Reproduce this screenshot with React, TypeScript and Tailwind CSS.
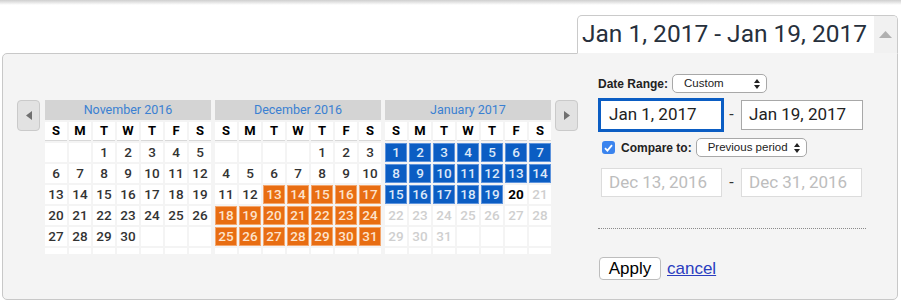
import React from 'react';

type Month = { title: string; startDay: number; days: number; key: string };

const months: Month[] = [
  { title: 'November 2016', startDay: 2, days: 30, key: 'nov' },
  { title: 'December 2016', startDay: 4, days: 31, key: 'dec' },
  { title: 'January 2017', startDay: 0, days: 31, key: 'jan' },
];

const dayNames = ['S', 'M', 'T', 'W', 'T', 'F', 'S'];

// which style a day gets
const dayKind = (key: string, d: number) => {
  if (key === 'dec' && d >= 13) return 'orange';
  if (key === 'jan' && d <= 19) return 'blue';
  if (key === 'jan' && d === 20) return 'today';
  if (key === 'jan' && d > 20) return 'future';
  return 'normal';
};

const Calendar = ({ month }: { month: Month }) => {
  const cells: (number | null)[] = [];
  for (let i = 0; i < month.startDay; i++) cells.push(null);
  for (let d = 1; d <= month.days; d++) cells.push(d);
  while (cells.length < 35) cells.push(null);

  return (
    <div className="w-[166px] flex flex-col">
      <div className="h-[20px] bg-[#d4d4d4] flex items-center justify-center text-[12.5px] text-[#3a80d2] font-['Roboto',sans-serif]">
        {month.title}
      </div>
      <div className="grid grid-cols-7 gap-[2px] mt-[2px] font-['Roboto',sans-serif]">
        {dayNames.map((n, i) => (
          <div key={i} className="h-[19px] bg-white flex items-center justify-center text-[13px] font-bold text-black border-b border-[#d8d8d8]">
            {n}
          </div>
        ))}
        {cells.map((d, i) => {
          if (d === null) return <div key={i} className="h-[19px] bg-white" />;
          const kind = dayKind(month.key, d);
          if (kind === 'orange')
            return (
              <div key={i} className="h-[19px] bg-[#e86d12] border border-[#f4a66c] flex items-center justify-center text-[13.5px] font-medium text-[#fde3cc]">
                {d}
              </div>
            );
          if (kind === 'blue')
            return (
              <div key={i} className="h-[19px] bg-[#0b5dc3] border border-[#5d93dc] flex items-center justify-center text-[13.5px] font-medium text-[#dbe8f9]">
                {d}
              </div>
            );
          return (
            <div
              key={i}
              className={
                kind === 'today'
                  ? 'h-[19px] bg-white flex items-center justify-center text-[13.5px] font-bold text-black'
                  : kind === 'future'
                  ? 'h-[19px] bg-white flex items-center justify-center text-[13.5px] font-medium text-[#cfcfcf]'
                  : 'h-[19px] bg-white flex items-center justify-center text-[13.5px] font-medium text-[#333]'
              }
            >
              {d}
            </div>
          );
        })}
        {dayNames.map((_, i) => (
          <div key={'e' + i} className="h-[6px] bg-white" />
        ))}
      </div>
    </div>
  );
};

const NavButton = ({ dir }: { dir: 'left' | 'right' }) => (
  <div className="w-[23px] h-[31px] bg-[#e2e2e2] border border-[#cacaca] rounded-[4px] flex items-center justify-center">
    <svg width="6" height="9" viewBox="0 0 6 9">
      {dir === 'left' ? <path d="M6 0 L0 4.5 L6 9 Z" fill="#707070" /> : <path d="M0 0 L6 4.5 L0 9 Z" fill="#707070" />}
    </svg>
  </div>
);

const SelectBox = ({ label, width }: { label: string; width: string }) => (
  <div className={`${width} h-[19px] bg-white border border-[#a8a8a8] rounded-[5px] flex items-center justify-between pl-[11px] pr-[6px] text-[11.5px] text-[#222] font-['Liberation_Sans',sans-serif] whitespace-nowrap`}>
    <span>{label}</span>
    <svg width="6" height="10" viewBox="0 0 6 10">
      <path d="M0 4 L3 0 L6 4 Z" fill="#222" />
      <path d="M0 6 L3 10 L6 6 Z" fill="#222" />
    </svg>
  </div>
);

export default function App() {
  return (
    <div className="w-[901px] h-[301px] bg-white overflow-hidden flex flex-col">
      <div className="h-[5px] bg-gradient-to-b from-[#cfcfcf] to-white" />

      {/* date range toggle */}
      <div className="mt-[10px] flex justify-end pr-[3px]">
        <div className="relative z-10 -mb-px w-[321px] h-[39px] border border-[#cacaca] border-b-[#f4f4f4] rounded-t-[5px] bg-white flex overflow-hidden">
          <div className="flex-1 flex items-center pl-[4px] text-[24.5px] text-[#27303c] font-['Roboto',sans-serif] whitespace-nowrap">
            Jan 1, 2017 - Jan 19, 2017
          </div>
          <div className="w-[23px] bg-[#f1f1f1] flex items-center justify-center">
            <svg width="13" height="7" viewBox="0 0 13 7">
              <path d="M0 7 L6.5 0 L13 7 Z" fill="#b0b0b0" />
            </svg>
          </div>
        </div>
      </div>

      {/* panel */}
      <div className="ml-[2px] w-[896px] h-[247px] border border-[#c8c8c8] rounded-tl-[5px] rounded-b-[5px] bg-[#f4f4f4] flex items-start pl-[14px] pt-[20px]">
        <div className="mt-[26px] flex items-start">
          <NavButton dir="left" />
          <div className="ml-[5px] flex gap-[4px]">
            {months.map((m) => (
              <Calendar key={m.key} month={m} />
            ))}
          </div>
          <div className="ml-[4px]">
            <NavButton dir="right" />
          </div>
        </div>

        <div className="ml-[20px] w-[268px] flex flex-col">
          <div className="h-[19px] flex items-center gap-[4px]">
            <span className="text-[12px] font-bold text-[#222] font-['Liberation_Sans',sans-serif]">Date Range:</span>
            <SelectBox label="Custom" width="w-[95px]" />
          </div>

          <div className="mt-[7px] flex items-center">
            <div className="ml-[2px] w-[122px] h-[30px] bg-white border border-[#0b5dc3] ring-2 ring-[#0b5dc3] flex items-center pl-[8px] text-[17px] text-[#222] font-['Roboto',sans-serif]">
              Jan 1, 2017
            </div>
            <span className="w-[19px] text-center text-[16px] text-[#333] font-['Roboto',sans-serif]">-</span>
            <div className="w-[122px] h-[30px] bg-white border border-[#a8a8a8] flex items-center pl-[7px] text-[17px] text-[#222] font-['Roboto',sans-serif]">
              Jan 19, 2017
            </div>
          </div>

          <div className="mt-[8px] h-[19px] flex items-center">
            <div className="ml-[4px] w-[13px] h-[13px] rounded-[3px] bg-[#3b84ee] flex items-center justify-center">
              <svg width="9" height="8" viewBox="0 0 9 8">
                <path d="M1 4.2 L3.4 6.6 L8 1.2" stroke="white" strokeWidth="1.8" fill="none" />
              </svg>
            </div>
            <span className="ml-[6px] text-[12px] font-bold text-[#222] font-['Liberation_Sans',sans-serif]">Compare to:</span>
            <div className="ml-[4px]">
              <SelectBox label="Previous period" width="w-[111px]" />
            </div>
          </div>

          <div className="mt-[11px] flex items-center">
            <div className="ml-[3px] w-[121px] h-[29px] bg-white border border-[#dcdcdc] flex items-center pl-[7px] text-[17px] text-[#bdbdbd] font-['Roboto',sans-serif]">
              Dec 13, 2016
            </div>
            <span className="w-[19px] text-center text-[16px] text-[#333] font-['Roboto',sans-serif]">-</span>
            <div className="w-[121px] h-[29px] bg-white border border-[#dcdcdc] flex items-center pl-[7px] text-[17px] text-[#bdbdbd] font-['Roboto',sans-serif]">
              Dec 31, 2016
            </div>
          </div>

          <div className="mt-[31px] border-t border-dotted border-[#8a8a8a]" />

          <div className="mt-[27px] flex items-center gap-[6px] font-['Liberation_Sans',sans-serif]">
            <button className="ml-[1px] w-[62px] h-[23px] bg-white border border-[#bdbdbd] rounded-[4px] text-[17px] text-black leading-none">
              Apply
            </button>
            <a className="text-[17px] text-[#2a3dbf] underline">cancel</a>
          </div>
        </div>
      </div>
    </div>
  );
}
